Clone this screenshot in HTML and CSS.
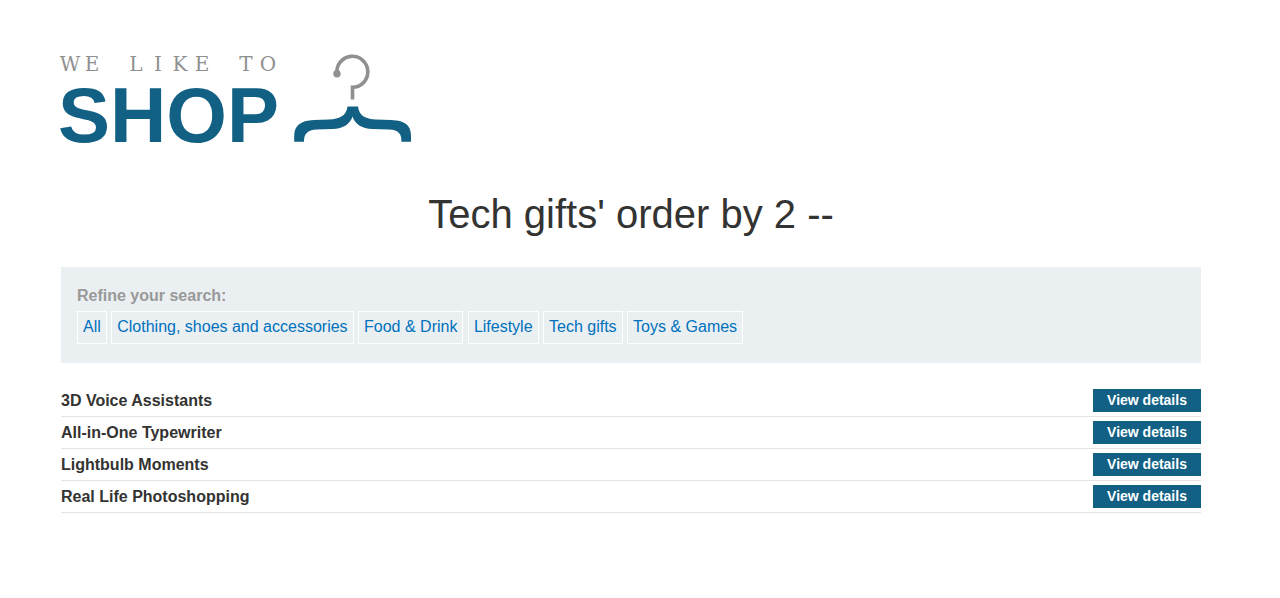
FILE: index.html
```html
<!DOCTYPE html>
<html lang="en">
<head>
<meta charset="utf-8">
<meta name="viewport" content="width=device-width, initial-scale=1">
<title>We Like to Shop</title>
<link rel="stylesheet" href="styles.css">
</head>
<body>
<main class="container">
  <header class="header">
    <svg class="logo" viewBox="0 0 352 96" role="img" aria-label="We like to shop">
      <text class="logo-small" x="9 31 53 75 97 119 141 163 185 207" y="21">WE LIKE TO</text>
      <text class="logo-big" x="-3" y="92">SHOP</text>
      <path class="hook" d="M276 24 A15.5 15.5 0 1 1 291.5 37.3 V49.5"/>
      <circle class="hook-tip" cx="276" cy="23.8" r="3.7"/>
      <path class="hanger" d="M286.500 56.500 H297 C298 65.500 304 69 315 69.500 L330 70 C345 70.500 350 76 350 86 V91.700 H340.500 C340.500 84 338 80 328 79.500 L312 79 C300 78.500 294 74 291.500 66.500 C289 74 283 78.500 271 79 L256 79.500 C246 80 243 84 243 91.700 H233.200 V86 C233.200 76 239 70.500 253 70 L268 69.500 C279 69 285.500 65.500 286.500 56.500 Z"/>
    </svg>
  </header>
  <h1 class="title">Tech gifts' order by 2 --</h1>
  <nav class="filters" aria-labelledby="filters-label">
    <div class="filters-label" id="filters-label">Refine your search:</div>
    <a class="filter" href="#">All</a>
    <a class="filter" href="#">Clothing, shoes and accessories</a>
    <a class="filter" href="#">Food &amp; Drink</a>
    <a class="filter" href="#">Lifestyle</a>
    <a class="filter" href="#">Tech gifts</a>
    <a class="filter" href="#">Toys &amp; Games</a>
  </nav>
  <table class="products">
    <tbody>
      <tr><th scope="row">3D Voice Assistants</th><td><a class="button" href="#">View details</a></td></tr>
      <tr><th scope="row">All-in-One Typewriter</th><td><a class="button" href="#">View details</a></td></tr>
      <tr><th scope="row">Lightbulb Moments</th><td><a class="button" href="#">View details</a></td></tr>
      <tr><th scope="row">Real Life Photoshopping</th><td><a class="button" href="#">View details</a></td></tr>
    </tbody>
  </table>
</main>
</body>
</html>
```

FILE: styles.css
```css
* {
  box-sizing: border-box;
}

body {
  margin: 0;
  padding: 50px 18px 0 0;
  background: #fff;
  color: #333332;
  font-family: "Liberation Sans", Arial, sans-serif;
  font-size: 16px;
  line-height: 22px;
}

.container {
  width: 90.4%;
  max-width: 1140px;
  margin: 0 auto;
}

.logo {
  display: block;
  width: 352px;
  height: 96px;
  overflow: visible;
}

.logo-small {
  fill: #8f9090;
  font-family: "DejaVu Serif", serif;
  font-size: 20px;
  text-anchor: middle;
}

.logo-big {
  fill: #126084;
  font-size: 78px;
  font-weight: bold;
}

.hook {
  fill: none;
  stroke: #8f9090;
  stroke-width: 3.6;
}

.hook-tip {
  fill: #8f9090;
}

.hanger {
  fill: #126084;
}

.title {
  margin: 44px 0 29px;
  font-size: 40px;
  font-weight: normal;
  line-height: 48px;
  text-align: center;
}

.filters {
  padding: 18px 16px 19px;
  background: #eaeff2;
}

.filters-label {
  margin-bottom: 4px;
  color: #999;
  font-weight: bold;
}

.filter {
  display: inline-block;
  padding: 4px 5px 5px;
  border: 1px solid #fff;
  color: #0071bc;
  text-decoration: none;
}

.products {
  width: 100%;
  margin-top: 22px;
  border-collapse: collapse;
}

.products th,
.products td {
  padding: 4px 0;
  border-bottom: 1px solid #e5e5e5;
}

.products th {
  text-align: left;
}

.products td {
  width: 108px;
}

.button {
  display: block;
  padding-bottom: 1px;
  background: #126084;
  color: #fff;
  font-size: 14px;
  font-weight: bold;
  text-align: center;
  text-decoration: none;
}
```
